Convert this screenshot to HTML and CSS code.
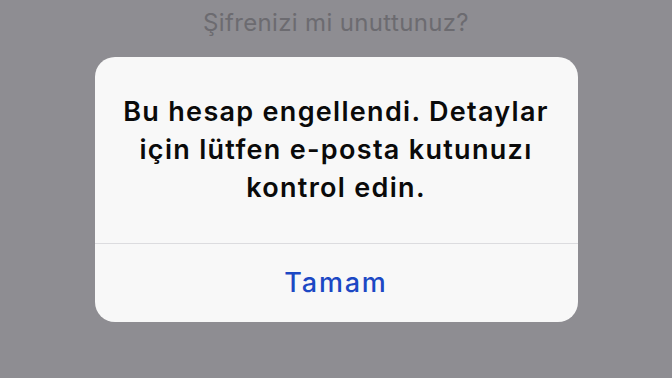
FILE: index.html
```html
<!DOCTYPE html>
<html>
<head>
    <title>Hesap engellendi</title>
    <link rel="stylesheet" href="styles.css">
</head>
<body>
    <div class="screen">
        <p class="forgot">Şifrenizi mi unuttunuz?</p>

        <div class="alert">
            <p class="alert-message">Bu hesap engellendi. Detaylar için lütfen e-posta kutunuzı kontrol edin.</p>
            <div class="alert-actions">
                <button class="alert-button">Tamam</button>
            </div>
        </div>
    </div>
</body>
</html>
```

FILE: styles.css
```css
body {
    margin: 0;
    background: #8e8d92;
    font-family: Inter, "Noto Sans", sans-serif;
}
.screen {
    height: 378px;
    display: flex;
    flex-direction: column;
    align-items: center;
    overflow: hidden;
}
.forgot {
    margin: 0;
    padding-top: 8px;
    height: 49px;
    font-size: 24px;
    line-height: 30px;
    letter-spacing: 0.35px;
    color: #6c6b70;
}
.alert {
    width: 483px;
    background: #f8f8f8;
    border-radius: 20px;
    overflow: hidden;
}
.alert-message {
    margin: 0;
    padding: 36px 22px 36px;
    text-align: center;
    font-size: 27px;
    font-weight: 600;
    line-height: 38px;
    letter-spacing: 1.3px;
    color: #0a0a0a;
}
.alert-actions {
    border-top: 1px solid #dcdcdf;
    height: 78px;
    display: flex;
}
.alert-button {
    flex: 1;
    border: 0;
    background: none;
    font-family: Inter, "Noto Sans", sans-serif;
    font-size: 27px;
    font-weight: 500;
    letter-spacing: 1.8px;
    color: #1c48c4;
    padding: 0 0 2px;
}
```
